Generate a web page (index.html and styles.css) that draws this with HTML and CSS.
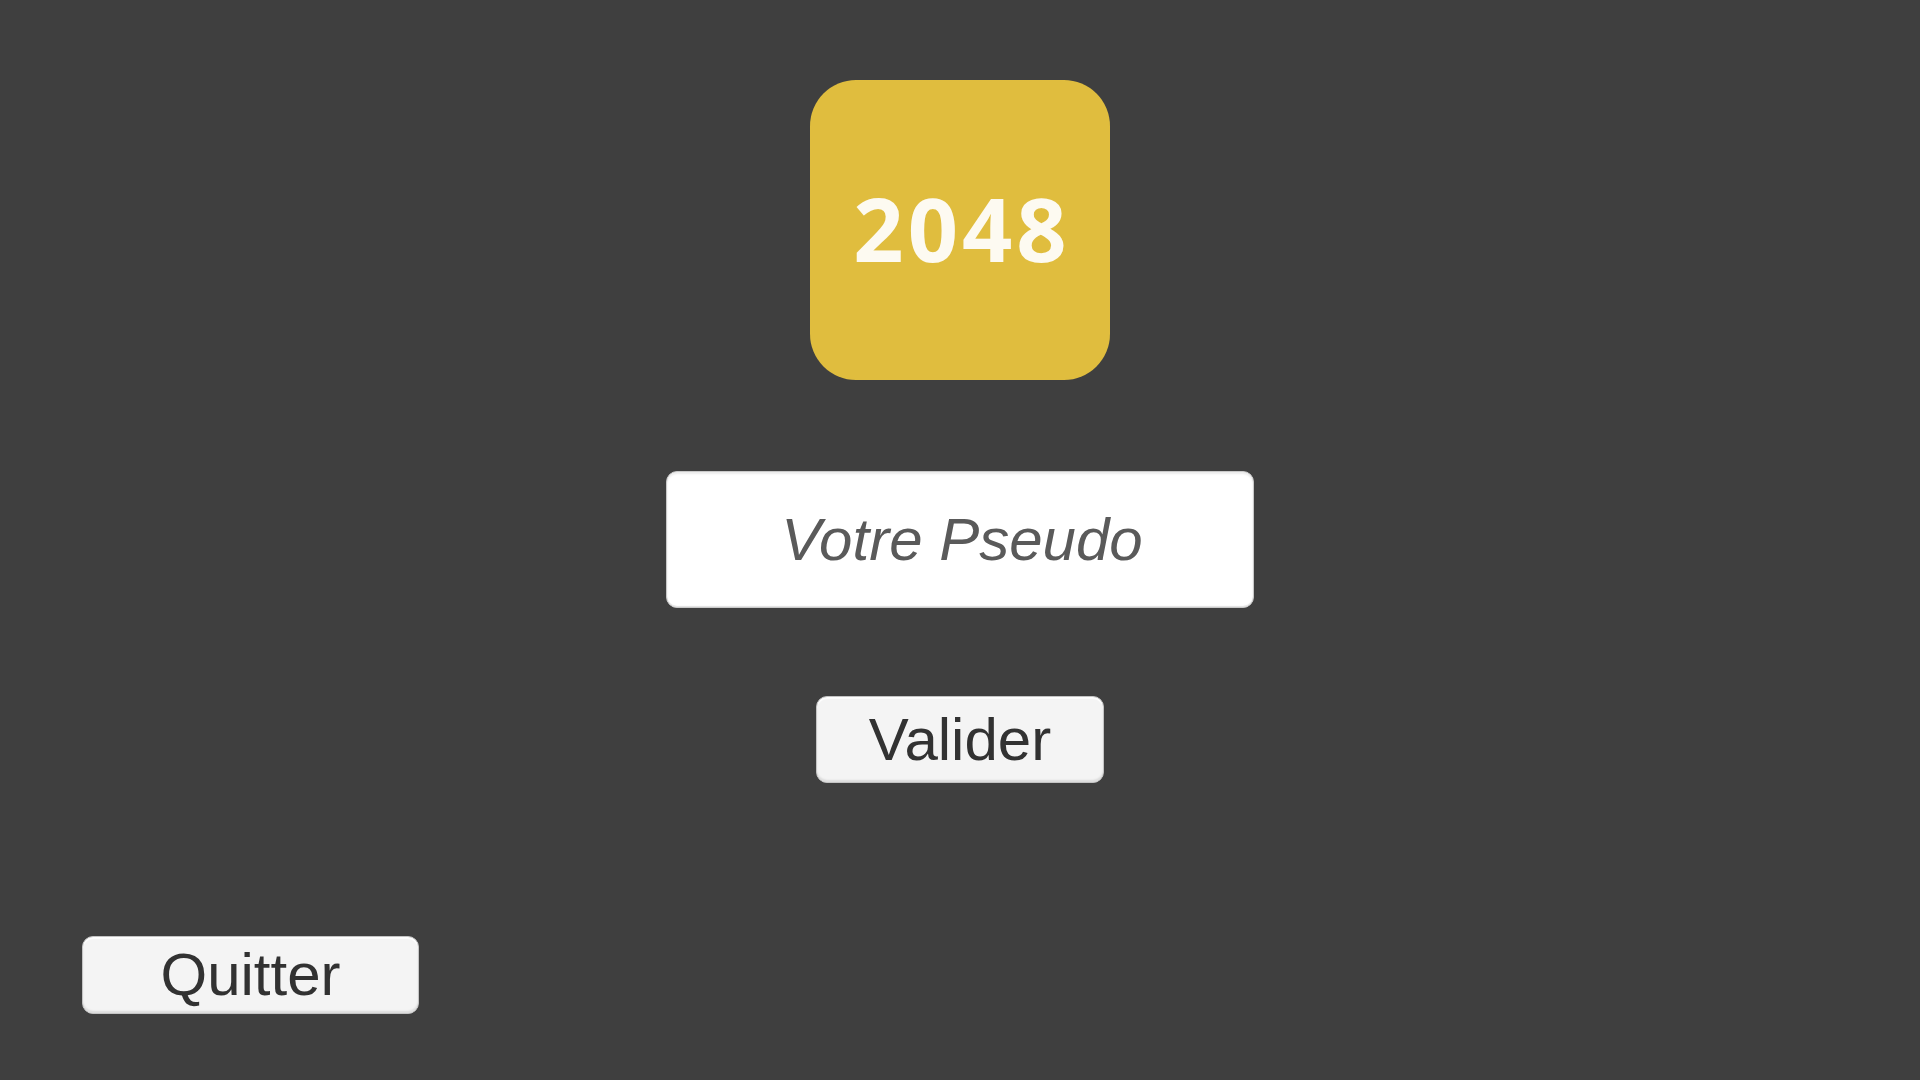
FILE: index.html
```html
<!DOCTYPE html>
<html lang="fr">
<head>
<meta charset="utf-8">
<title>2048</title>
<link rel="stylesheet" href="styles.css">
</head>
<body>
<main class="screen">
  <section class="center">
    <div class="logo"><span class="logo-text">2048</span></div>
    <div class="pseudo-field"><span class="placeholder">Votre Pseudo</span></div>
    <button class="btn btn-valider">Valider</button>
  </section>
  <footer class="footer">
    <button class="btn btn-quitter">Quitter</button>
  </footer>
</main>
</body>
</html>
```

FILE: styles.css
```css
html, body {
  margin: 0;
  padding: 0;
  width: 1920px;
  height: 1080px;
  background: #3f3f3f;
  overflow: hidden;
}

.screen {
  display: flex;
  flex-direction: column;
  width: 1920px;
  height: 1080px;
  box-sizing: border-box;
  padding-top: 80px;
}

.center {
  display: flex;
  flex-direction: column;
  align-items: center;
}

.logo {
  width: 300px;
  height: 300px;
  border-radius: 46px;
  background: #e0bd3e;
  display: flex;
  align-items: center;
  justify-content: center;
}

.logo-text {
  font-family: "Open Sans", "Noto Sans", sans-serif;
  font-weight: 700;
  font-size: 88px;
  line-height: 1;
  color: #fdfaf1;
  letter-spacing: 4px;
  margin-top: -4px;
  margin-left: 4px;
}

.pseudo-field {
  margin-top: 91px;
  width: 588px;
  height: 137px;
  box-sizing: border-box;
  background: #ffffff;
  border-radius: 11px;
  border: 1px solid #c9c9c9;
  box-shadow: inset 0 2px 2px rgba(0, 0, 0, 0.08), inset 0 -1px 1px rgba(0, 0, 0, 0.12);
  display: flex;
  align-items: center;
  justify-content: center;
}

.placeholder {
  font-family: "Liberation Sans", Arial, sans-serif;
  font-style: italic;
  font-size: 60px;
  line-height: 1;
  color: #5a5a5a;
  margin-left: 4px;
}

.btn {
  box-sizing: border-box;
  background: #f4f4f4;
  border: 1px solid #c4c4c4;
  border-radius: 11px;
  box-shadow: inset 0 2px 1px rgba(255, 255, 255, 0.9), inset 0 -2px 2px rgba(0, 0, 0, 0.10);
  font-family: "Liberation Sans", Arial, sans-serif;
  font-size: 60px;
  line-height: 1;
  color: #323232;
  padding: 0;
  display: flex;
  align-items: center;
  justify-content: center;
}

.btn-valider {
  margin-top: 88px;
  width: 288px;
  height: 87px;
}

.footer {
  display: flex;
  padding-left: 82px;
  margin-top: 153px;
}

.btn-quitter {
  width: 337px;
  height: 78px;
}
```
